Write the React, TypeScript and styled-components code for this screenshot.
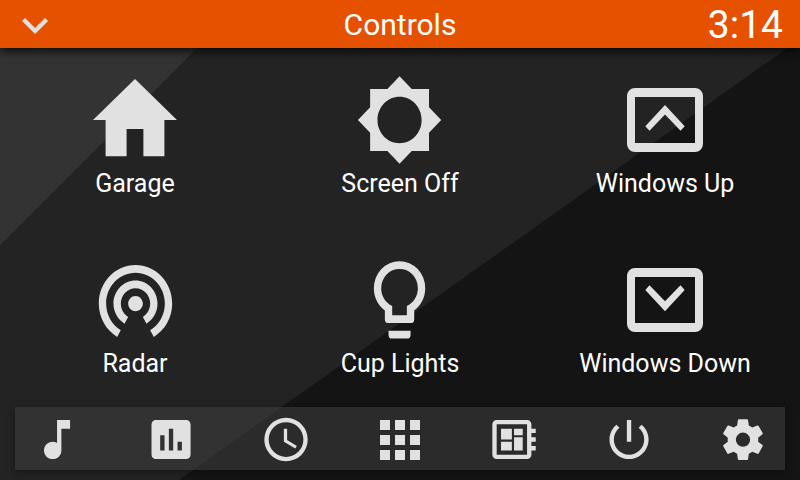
import React from "react";
import styled, { createGlobalStyle } from "styled-components";

const GlobalStyle = createGlobalStyle`
  * { box-sizing: border-box; }
  body {
    margin: 0;
    background: #141414;
    font-family: Roboto, "Liberation Sans", sans-serif;
    color: #fff;
  }
  button {
    margin: 0;
    padding: 0;
    border: 0;
    background: none;
    color: inherit;
    font: inherit;
    cursor: pointer;
  }
  svg { display: block; }
`;

const Screen = styled.div`
  position: relative;
  isolation: isolate;
  display: flex;
  flex-direction: column;
  min-height: 100vh;
  overflow: hidden;
`;

const Backdrop = styled.svg`
  position: absolute;
  inset: 0;
  width: 100%;
  height: 100%;
  z-index: -1;
`;

const Header = styled.header`
  display: grid;
  grid-template-columns: 1fr auto 1fr;
  align-items: center;
  height: 48px;
  padding: 2px 17px 0;
  background: #e65100;
  box-shadow: 0 3px 10px rgba(0, 0, 0, 0.8);
`;

const CollapseButton = styled.button`
  justify-self: start;
  margin-left: -8px;
`;

const Title = styled.h1`
  margin: 0;
  font-size: 30px;
  line-height: 46px;
  font-weight: 400;
`;

const Clock = styled.time`
  justify-self: end;
  font-size: 39px;
  line-height: 46px;
`;

const Grid = styled.main`
  flex: 1;
  display: grid;
  grid-template-columns: repeat(3, minmax(0, 1fr));
  grid-auto-rows: 175px;
  align-content: start;
  gap: 5px;
  padding: 0 5px;
`;

const Tile = styled.button`
  display: flex;
  flex-direction: column;
  align-items: center;
  padding-top: 27px;
`;

const TileLabel = styled.span`
  font-size: 25px;
  line-height: 38px;
  white-space: nowrap;
`;

const Dock = styled.nav`
  display: flex;
  justify-content: space-between;
  margin: 0 15px 10px;
  padding: 6px 16px 5px;
  background: rgba(66, 66, 66, 0.5);
  box-shadow: 0 2px 8px rgba(0, 0, 0, 0.4);
`;

const Glyph = styled.svg`
  fill: #e1e1e1;
`;

type Drawing = { transform?: string; d: string };
type Item = { label: string; icon: Drawing };

const FRAME =
  "M15 13H75A8 8 0 0 1 83 21V69A8 8 0 0 1 75 77H15A8 8 0 0 1 7 69V21A8 8 0 0 1 15 13ZM15 22V68H75V22Z";

const controls: Item[] = [
  {
    label: "Garage",
    icon: {
      transform: "translate(-5.4 -9.65) scale(4.2 4.55)",
      d: "M10 20V14H14V20H19V12H22L12 3L2 12H5V20H10Z",
    },
  },
  {
    label: "Screen Off",
    icon: {
      transform: "translate(0.4 -1.4) scale(3.68 3.87)",
      d: "M20 15.31L23.31 12 20 8.69V4h-4.69L12 .69 8.69 4H4v4.69L.69 12 4 15.31V20h4.69L12 23.31 15.31 20H20v-4.69zM12 18c-3.31 0-6-2.69-6-6s2.69-6 6-6 6 2.69 6 6-2.69 6-6 6z",
    },
  },
  {
    label: "Windows Up",
    icon: { d: FRAME + "M45 30L64.7 51.3L60.5 55.8L45 39.6L29.5 55.8L25.3 51.3Z" },
  },
  {
    label: "Radar",
    icon: {
      transform: "translate(1.46 -1.58) scale(3.67 3.86)",
      d: "M12 11c-1.1 0-2 .9-2 2s.9 2 2 2 2-.9 2-2-.9-2-2-2zm6 2c0-3.31-2.69-6-6-6s-6 2.69-6 6c0 2.22 1.21 4.15 3 5.19l1-1.74c-1.19-.7-2-1.97-2-3.45 0-2.21 1.79-4 4-4s4 1.79 4 4c0 1.48-.81 2.75-2 3.45l1 1.74c1.79-1.04 3-2.97 3-5.19zM12 3C6.48 3 2 7.48 2 13c0 3.7 2.01 6.92 4.99 8.65l1-1.73C5.61 18.53 4 15.96 4 13c0-4.42 3.58-8 8-8s8 3.58 8 8c0 2.96-1.61 5.53-4 6.92l1 1.73c2.99-1.73 5-4.95 5-8.65 0-5.52-4.48-10-10-10z",
    },
  },
  {
    label: "Cup Lights",
    icon: {
      transform: "translate(0.5 -1.6) scale(3.67 3.87)",
      d: "M12 2A7 7 0 0 1 19 9C19 11.38 17.81 13.47 16 14.74V17A1 1 0 0 1 15 18H9A1 1 0 0 1 8 17V14.74C6.19 13.47 5 11.38 5 9A7 7 0 0 1 12 2M9 21V20H15V21A1 1 0 0 1 14 22H10A1 1 0 0 1 9 21M12 4A5 5 0 0 0 7 9C7 11.05 8.23 12.81 10 13.58V16H14V13.58C15.77 12.81 17 11.05 17 9A5 5 0 0 0 12 4Z",
    },
  },
  {
    label: "Windows Down",
    icon: { d: FRAME + "M29.5 30.3L45 46.3L60.5 30.3L64.7 35L45 56.2L25.3 35Z" },
  },
];

const DOCK_SCALE = "translate(0 0.5) scale(2.17)";

const dockItems: Item[] = [
  {
    label: "Music",
    icon: {
      transform: DOCK_SCALE,
      d: "M12 3v10.55c-.59-.34-1.27-.55-2-.55-2.21 0-4 1.79-4 4s1.79 4 4 4 4-1.79 4-4V7h4V3h-6z",
    },
  },
  {
    label: "Statistics",
    icon: {
      transform: DOCK_SCALE,
      d: "M19 3H5c-1.1 0-2 .9-2 2v14c0 1.1.9 2 2 2h14c1.1 0 2-.9 2-2V5c0-1.1-.9-2-2-2zM9 17H7v-7h2v7zm4 0h-2V7h2v10zm4 0h-2v-4h2v4z",
    },
  },
  {
    label: "Clock",
    icon: {
      transform: DOCK_SCALE,
      d: "M12 20A8 8 0 0 0 20 12A8 8 0 0 0 12 4A8 8 0 0 0 4 12A8 8 0 0 0 12 20M12 2A10 10 0 0 1 22 12A10 10 0 0 1 12 22C6.47 22 2 17.5 2 12A10 10 0 0 1 12 2M12.5 7V12.25L17 14.92L16.25 16.15L11 13V7H12.5Z",
    },
  },
  {
    label: "Controls",
    icon: {
      transform: "translate(-4 -3) scale(2.5)",
      d: "M16 20H20V16H16M16 14H20V10H16M10 8H14V4H10M16 8H20V4H16M10 14H14V10H10M4 14H8V10H4M4 20H8V16H4M10 20H14V16H10M4 8H8V4H4V8Z",
    },
  },
  {
    label: "Board",
    icon: {
      transform: DOCK_SCALE,
      d: "M22 9V7h-2V5c0-1.1-.9-2-2-2H4c-1.1 0-2 .9-2 2v14c0 1.1.9 2 2 2h14c1.1 0 2-.9 2-2v-2h2v-2h-2v-2h2v-2h-2V9h2zm-4 10H4V5h14v14zM6 13h5v4H6zm6-6h4v3h-4zM6 7h5v5H6zm6 4h4v6h-4z",
    },
  },
  {
    label: "Power",
    icon: {
      transform: DOCK_SCALE,
      d: "M13 3h-2v10h2V3zm4.83 2.17l-1.42 1.42C17.99 7.86 19 9.81 19 12c0 3.87-3.13 7-7 7s-7-3.13-7-7c0-2.19 1.01-4.14 2.58-5.42L6.17 5.17C4.23 6.82 3 9.26 3 12c0 4.97 4.03 9 9 9s9-4.03 9-9c0-2.74-1.23-5.18-3.17-6.83z",
    },
  },
  {
    label: "Settings",
    icon: {
      transform: "translate(1.5 2.2) scale(2.04)",
      d: "M12 15.5A3.5 3.5 0 0 1 8.5 12A3.5 3.5 0 0 1 12 8.5A3.5 3.5 0 0 1 15.5 12A3.5 3.5 0 0 1 12 15.5M19.43 12.97C19.47 12.65 19.5 12.33 19.5 12C19.5 11.67 19.47 11.34 19.43 11L21.54 9.37C21.73 9.22 21.78 8.95 21.66 8.73L19.66 5.27C19.54 5.05 19.27 4.96 19.05 5.05L16.56 6.05C16.04 5.66 15.5 5.32 14.87 5.07L14.5 2.42C14.46 2.18 14.25 2 14 2H10C9.75 2 9.54 2.18 9.5 2.42L9.13 5.07C8.5 5.32 7.96 5.66 7.44 6.05L4.95 5.05C4.73 4.96 4.46 5.05 4.34 5.27L2.34 8.73C2.21 8.95 2.27 9.22 2.46 9.37L4.57 11C4.53 11.34 4.5 11.67 4.5 12C4.5 12.33 4.53 12.65 4.57 12.97L2.46 14.63C2.27 14.78 2.21 15.05 2.34 15.27L4.34 18.73C4.46 18.95 4.73 19.03 4.95 18.95L7.44 17.94C7.96 18.34 8.5 18.68 9.13 18.93L9.5 21.58C9.54 21.82 9.75 22 10 22H14C14.25 22 14.46 21.82 14.5 21.58L14.87 18.93C15.5 18.67 16.04 18.34 16.56 17.94L19.05 18.95C19.27 19.03 19.54 18.95 19.66 18.73L21.66 15.27C21.78 15.05 21.73 14.78 21.54 14.63L19.43 12.97Z",
    },
  },
];

function Icon({ icon, width, height }: { icon: Drawing; width: number; height: number }) {
  return (
    <Glyph width={width} height={height} viewBox={`0 0 ${width} ${height}`} aria-hidden="true">
      <path d={icon.d} transform={icon.transform} fillRule="evenodd" />
    </Glyph>
  );
}

const collapseIcon: Drawing = {
  transform: "translate(0 -2.7) scale(2.17)",
  d: "M7.41 8.58L12 13.17L16.59 8.58L18 10L12 16L6 10L7.41 8.58Z",
};

export default function App() {
  return (
    <>
      <GlobalStyle />
      <Screen>
        <Backdrop viewBox="0 0 800 480" preserveAspectRatio="none" aria-hidden="true">
          <rect width="800" height="480" fill="#141414" />
          <path d="M0 0H855L179 480H0Z" fill="#232323" />
          <path d="M0 0H245L0 245Z" fill="#333333" />
        </Backdrop>
        <Header>
          <CollapseButton type="button" aria-label="Collapse">
            <Icon icon={collapseIcon} width={52} height={46} />
          </CollapseButton>
          <Title>Controls</Title>
          <Clock>3:14</Clock>
        </Header>
        <Grid>
          {controls.map((item) => (
            <Tile key={item.label} type="button">
              <Icon icon={item.icon} width={90} height={90} />
              <TileLabel>{item.label}</TileLabel>
            </Tile>
          ))}
        </Grid>
        <Dock aria-label="Main menu">
          {dockItems.map((item) => (
            <button key={item.label} type="button" aria-label={item.label}>
              <Icon icon={item.icon} width={52} height={52} />
            </button>
          ))}
        </Dock>
      </Screen>
    </>
  );
}
